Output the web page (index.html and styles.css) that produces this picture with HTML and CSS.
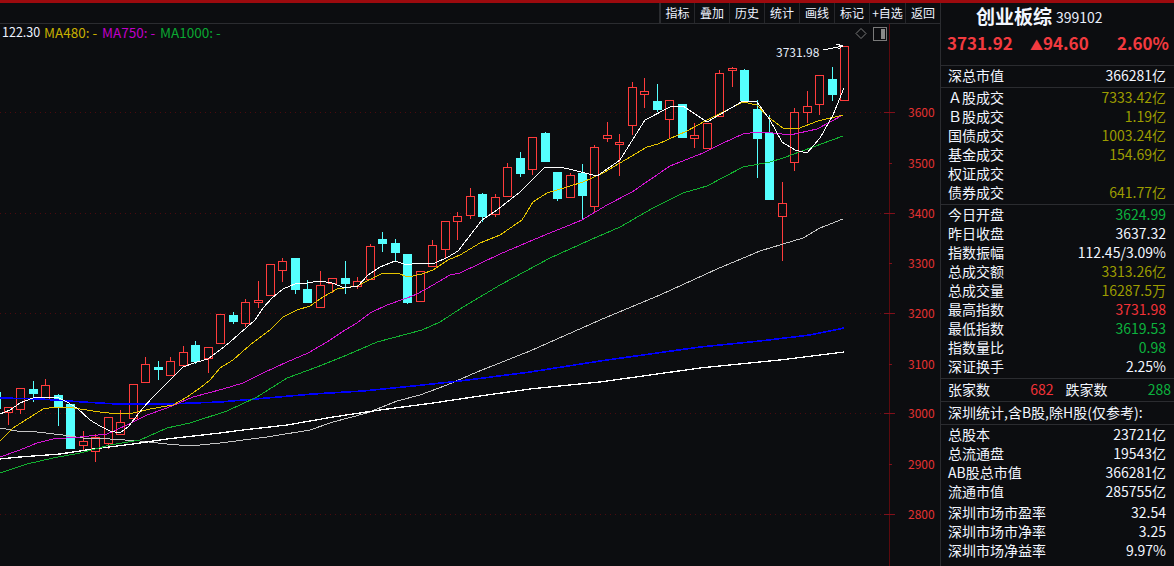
FILE: index.html
```html
<!DOCTYPE html>
<html lang="zh">
<head>
<meta charset="utf-8">
<title>创业板综 399102</title>
<link rel="stylesheet" href="styles.css">
</head>
<body>
<div class="app">
  <div class="topstrip"></div>
  <div class="main">
    <section class="chartcol">
      <nav class="toolbar">
        <span class="tool">指标</span><span class="tool">叠加</span><span class="tool">历史</span><span class="tool">统计</span><span class="tool">画线</span><span class="tool">标记</span><span class="tool wide">+自选</span><span class="tool last">返回</span>
      </nav>
      <div class="chartarea">
        <div class="legend">
          <span class="lg lg-val">122.30</span>
          <span class="lg lg-480">MA480: -</span>
          <span class="lg lg-750">MA750: -</span>
          <span class="lg lg-1000">MA1000: -</span>
        </div>
        <svg id="chart" class="chart" width="940" height="542" viewBox="0 24 940 542" xmlns="http://www.w3.org/2000/svg"></svg>
      </div>
    </section>
    <aside class="panel">
      <header class="title"><span class="name">创业板综</span><span class="code">399102</span></header>
      <div class="quote"><span>3731.92</span><span class="chg"><span class="tri">▲</span>94.60</span><span>2.60%</span></div>
      <div class="block single">
        <div class="row"><span>深总市值</span><span>366281亿</span></div>
      </div>
      <div class="block">
        <div class="row"><span>Ａ股成交</span><span class="ol">7333.42亿</span></div>
        <div class="row"><span>Ｂ股成交</span><span class="ol">1.19亿</span></div>
        <div class="row"><span>国债成交</span><span class="ol">1003.24亿</span></div>
        <div class="row"><span>基金成交</span><span class="ol">154.69亿</span></div>
        <div class="row"><span>权证成交</span><span></span></div>
        <div class="row"><span>债券成交</span><span class="ol">641.77亿</span></div>
      </div>
      <div class="block">
        <div class="row"><span>今日开盘</span><span class="gr">3624.99</span></div>
        <div class="row"><span>昨日收盘</span><span>3637.32</span></div>
        <div class="row"><span>指数振幅</span><span>112.45/3.09%</span></div>
        <div class="row"><span>总成交额</span><span class="ol">3313.26亿</span></div>
        <div class="row"><span>总成交量</span><span class="ol">16287.5万</span></div>
        <div class="row"><span>最高指数</span><span class="re">3731.98</span></div>
        <div class="row"><span>最低指数</span><span class="gr">3619.53</span></div>
        <div class="row"><span>指数量比</span><span class="gr">0.98</span></div>
        <div class="row"><span>深证换手</span><span>2.25%</span></div>
      </div>
      <div class="block updown">
        <span>张家数</span><span class="re num">682</span><span class="dn">跌家数</span><span class="gr num">288</span>
      </div>
      <div class="block note">深圳统计,含B股,除H股(仅参考):</div>
      <div class="block last">
        <div class="row"><span>总股本</span><span>23721亿</span></div>
        <div class="row"><span>总流通盘</span><span>19543亿</span></div>
        <div class="row"><span>AB股总市值</span><span>366281亿</span></div>
        <div class="row"><span>流通市值</span><span>285755亿</span></div>
        <div class="row"><span>深圳市场市盈率</span><span>32.54</span></div>
        <div class="row"><span>深圳市场市净率</span><span>3.25</span></div>
        <div class="row"><span>深圳市场净益率</span><span>9.97%</span></div>
      </div>
    </aside>
  </div>
</div>
<script src="chart.js"></script>
</body>
</html>
```
FILE: styles.css
```css
* { box-sizing: border-box; }
html, body { margin: 0; height: 100%; background: #0c0d10; overflow: hidden; }
body { font-family: "Noto Sans CJK SC", "Noto Sans", sans-serif; color: #f2f6ff; }
.app { width: 1174px; height: 566px; display: flex; flex-direction: column; overflow: hidden; }
.topstrip { height: 3px; background: #9c0a0e; flex: none; }
.main { flex: 1; display: flex; min-height: 0; }
.chartcol { width: 940px; flex: none; display: flex; flex-direction: column; }
.toolbar { height: 21px; flex: none; display: flex; justify-content: flex-end; border-bottom: 1px solid #2b2c30; font-size: 12px; line-height: 20px; }
.tool { width: 35px; text-align: center; border-left: 1px solid #26272b; color: #eef3ff; }
.tool.wide { width: 36px; white-space: nowrap; }
.tool.last { width: 35px; }
.toolbar .tool:first-child { border-left: 2px solid #2b2c30; }
.chartarea { position: relative; flex: 1; min-height: 0; }
.chart { display: block; }
.legend { position: absolute; left: 0; top: 0; width: 240px; height: 16px; font-size: 13.5px; line-height: 16px; }
.lg { position: absolute; top: 0; white-space: nowrap; }
.lg-val { left: 2px; color: #eef3ff; font-size: 12.5px; }
.lg-480 { left: 44px; color: #c8b000; }
.lg-750 { left: 102px; color: #c000c8; }
.lg-1000 { left: 160px; color: #0aa832; }
.axis-label { font-size: 12px; fill: #e23232; font-family: "Noto Sans CJK SC", sans-serif; }
.hi-label { font-size: 12px; fill: #e6edfb; font-family: "Noto Sans CJK SC", sans-serif; }
.panel { width: 234px; flex: none; border-left: 1px solid #2b2c30; display: flex; flex-direction: column; }
.title { height: 25px; padding-left: 35px; display: flex; align-items: center; gap: 4px; white-space: nowrap; }
.name { font-size: 19px; font-weight: 700; line-height: 25px; }
.code { font-size: 14px; color: #e8eefb; position: relative; top: 1px; }
.quote { height: 37px; padding: 3px 5px 0 6px; display: flex; justify-content: space-between; font-size: 17px; line-height: 24px; font-weight: 700; color: #f23a3f; }
.chg { margin-right: 11px; }
.tri { font-size: 13px; }
.block { border-top: 1px solid #2b2c30; padding: 0 8px 2px 7px; display: flex; flex-direction: column; font-size: 14px; }
.block.single { height: 22px; }
.row { height: 19px; line-height: 19px; display: flex; justify-content: space-between; white-space: nowrap; }
.ol { color: #9c9c00; }
.gr { color: #0cb23e; }
.re { color: #f23238; }
.updown { height: 23px; flex-direction: row; align-items: center; white-space: nowrap; padding-right: 3px; padding-bottom: 2px; }
.updown .num { margin-left: auto; }
.updown .dn { margin-left: 12px; }
.note { height: 23px; line-height: 21px; white-space: nowrap; }
.block.last { flex: 1; }
.block.last .row:nth-child(5) { margin-top: 2px; }
```
FILE: chart.js
```js
var NS = 'http://www.w3.org/2000/svg';
var svg = document.getElementById('chart');
function el(name, attrs, text) {
  var e = document.createElementNS(NS, name);
  for (var k in attrs) e.setAttribute(k, attrs[k]);
  if (text) e.textContent = text;
  svg.appendChild(e);
  return e;
}
var RED = '#ff3c3c', CY = '#55ffff', AX = '#5c0a0e';

/* axis */
el('line', {x1: 889.5, y1: 24, x2: 889.5, y2: 566, stroke: AX, 'shape-rendering': 'crispEdges'});
[[3600,112],[3500,163],[3400,213],[3300,263],[3200,313],[3100,364],[3000,413],[2900,464],[2800,514]].forEach(function (t, i) {
  var major = i % 2 === 0;
  if (major) el('line', {x1: 0, y1: t[1] + .5, x2: 884, y2: t[1] + .5, stroke: '#4c0a0e', 'stroke-dasharray': '1 4', 'shape-rendering': 'crispEdges'});
  el('line', {x1: major ? 884 : 889, y1: t[1] + .5, x2: major ? 895 : 892, y2: t[1] + .5, stroke: '#80101a', 'shape-rendering': 'crispEdges'});
  el('text', {x: 908, y: t[1] + 5, 'class': 'axis-label'}, String(t[0]));
});

/* candles: [index, type, bodyTop, bodyBottom, high, low] */
var C = [
[-1,'c',392,408,392,408],[0,'r',407,412,407,425],[1,'r',388,409,388,414],[2,'c',389,393,381,402],[3,'r',385,399,379,399],
[4,'c',395,406,394,426],[5,'c',404,448,404,448],[6,'r',441,445,431,450],[7,'r',437,451,434,462],[8,'r',417,443,417,449],
[9,'r',422,434,410,434],[10,'r',384,418,384,418],[11,'r',364,382,357,382],[12,'c',367,369,361,380],[13,'r',361,375,357,375],
[14,'r',352,365,346,365],[15,'c',345,361,341,364],[16,'r',347,358,347,373],[17,'r',314,343,314,343],[18,'c',315,321,312,324],
[19,'r',302,323,299,327],[20,'r',300,302,281,308],[21,'r',264,295,264,295],[22,'r',261,270,258,282],[23,'c',258,289,258,294],
[24,'c',289,302,280,302],[25,'r',285,307,271,307],[26,'r',278,283,278,293],[27,'c',278,283,261,294],[28,'r',281,286,277,289],
[29,'r',246,279,244,279],[30,'c',239,243,232,252],[31,'c',243,252,239,262],[32,'c',254,302,254,304],[33,'r',271,301,271,301],
[34,'r',245,266,240,266],[35,'r',221,249,221,258],[36,'r',216,221,212,240],[37,'r',196,215,188,219],[38,'c',194,216,193,222],
[39,'r',197,214,194,217],[40,'r',167,196,163,196],[41,'c',158,173,152,177],[42,'r',137,169,137,175],[43,'c',133,161,132,161],
[44,'c',172,198,172,201],[45,'r',175,197,173,197],[46,'c',173,195,164,219],[47,'r',147,206,145,212],[48,'r',135,138,122,142],
[49,'r',142,144,134,176],[50,'r',87,125,82,135],[51,'r',91,94,78,108],[52,'c',101,109,84,112],[53,'r',100,119,100,138],
[54,'c',104,137,104,138],[55,'r',135,138,123,148],[56,'r',123,148,123,148],[57,'r',73,116,70,116],[58,'r',68,70,67,87],
[59,'c',70,100,69,100],[60,'c',109,138,100,178],[61,'c',133,199,115,199],[62,'r',203,216,182,261],[63,'r',112,162,108,171],
[64,'r',106,112,91,123],[65,'r',75,104,75,115],[66,'c',79,94,67,101],[67,'r',46,100,46,100]
];
C.forEach(function (d) {
  var c = d[0] < 0 ? -4 : Math.floor(8.4 + 12.48 * d[0]), col = d[1] === 'r' ? RED : CY;
  function wick(a, b) {
    if (b > a) el('line', {x1: c + .5, y1: a, x2: c + .5, y2: b, stroke: col, 'shape-rendering': 'crispEdges'});
  }
  wick(d[4], d[2]);
  wick(d[3], d[5]);
  if (d[1] === 'r') {
    el('rect', {x: c - 3.5, y: d[2] + .5, width: 8, height: d[3] - d[2], fill: 'none', stroke: col, 'stroke-width': 1.4, 'shape-rendering': 'crispEdges'});
  } else {
    el('rect', {x: c - 4, y: d[2], width: 9, height: d[3] - d[2] + 1, fill: col, 'shape-rendering': 'crispEdges'});
  }
});

/* moving averages */
var L = [
['#c4c4c4', 1, '0,428 17,431 37,432 63,435 83,438 110,439 140,441 167,444 190,446 220,443 267,437 310,430 333,422 367,413 397,401 420,395 447,385 477,372 530,351 600,320 660,295 717,269 760,251 803,238 820,228 843,219'],
['#0000ff', 1.6, '0,398 40,399 83,402 117,404 167,404 220,402 267,398 313,394 363,391 413,386 460,381 530,372 600,361 700,347 760,341 810,335 844,328'],
['#ffffff', 1.3, '0,459 20,457 60,454 93,449 133,444 167,439 220,433 243,430 287,425 333,417 380,410 433,403 480,396 530,389 600,382 700,368 780,360 844,352'],
['#12b030', 1, '0,473 27,464 53,458 80,453 110,445 140,440 167,428 190,423 227,411 257,397 287,378 317,367 347,355 377,342 422,330 440,322 460,309 500,285 550,258 590,240 620,227 653,208 683,193 707,186 743,167 770,162 783,158 813,147 843,136'],
['#d414d4', 1, '0,457 20,450 37,443 53,439 80,437 107,434 127,425 147,415 167,408 193,397 223,389 243,383 263,373 287,362 308,353 327,342 345,330 357,323 370,313 387,305 407,298 417,294 433,285 450,275 460,273 500,254 540,237 582,220 607,205 632,192 670,166 703,153 723,143 743,134 757,132 773,133 790,135 817,129 843,115'],
['#e6c400', 1, '0,441 13,428 43,409 55,407 67,407 80,409 100,412 117,414 133,413 150,409 173,405 187,397 200,388 210,380 220,368 233,360 250,345 270,330 283,317 297,310 310,306 323,297 337,289 357,286 373,278 383,273 397,273 408,277 422,274 433,270 448,260 460,255 480,243 500,235 522,220 533,202 547,193 567,187 583,182 603,173 620,163 647,147 658,144 687,131 707,120 743,102 757,105 768,117 783,128 797,129 818,121 843,115'],
['#ffffff', 1, '0,414 10,410 20,403 33,398 43,397 57,397 67,402 77,408 90,420 100,426 110,431 120,433 128,427 143,408 152,398 163,387 183,367 197,362 208,359 220,350 230,342 247,327 255,320 263,308 272,298 283,289 295,284 307,283 320,281 332,283 345,288 358,286 368,275 380,267 395,261 407,265 417,263 435,263 448,257 458,251 482,220 497,210 520,192 545,167 560,167 573,170 597,176 620,160 645,120 670,107 683,106 707,122 743,101 757,102 770,120 782,142 795,150 807,153 820,138 833,115 844,88']
];
L.forEach(function (l) {
  el('polyline', {points: l[2], fill: 'none', stroke: l[0], 'stroke-width': l[1], 'shape-rendering': 'crispEdges'});
});

/* high marker */
el('text', {x: 776, y: 57, 'class': 'hi-label'}, '3731.98');
el('path', {d: 'M823 50 L843 46 M836 44 L843 46 L838 49', fill: 'none', stroke: '#ffffff', 'shape-rendering': 'crispEdges'});

/* view toggles */
el('path', {d: 'M861 28.5 L866 33.5 L861 38.5 L856 33.5 Z', fill: 'none', stroke: '#7a7a7a', 'stroke-width': 1});
el('rect', {x: 873.5, y: 27.5, width: 13, height: 13, fill: 'none', stroke: '#7a7a7a', 'shape-rendering': 'crispEdges'});
el('rect', {x: 881, y: 29, width: 4, height: 10, fill: '#8a8a8a', 'shape-rendering': 'crispEdges'});
```
